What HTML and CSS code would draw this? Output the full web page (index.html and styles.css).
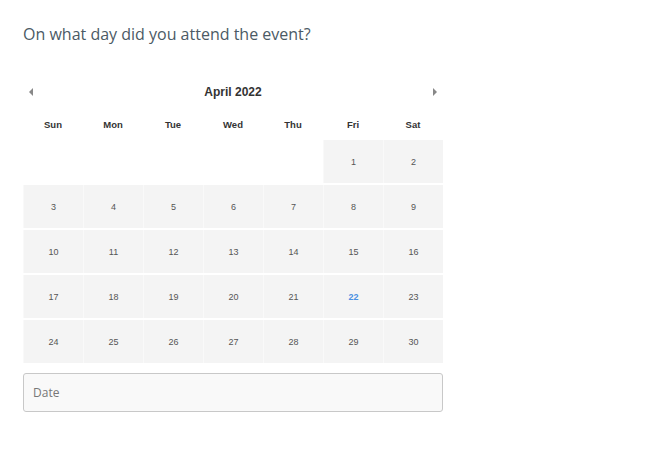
FILE: index.html
```html
<!DOCTYPE html>
<html lang="en">

<head>
    <meta charset="UTF-8">
    <meta name="viewport" content="width=device-width, initial-scale=1.0">
    <title>Event date</title>
    <link rel="stylesheet" href="styles.css">
</head>

<body>

    <p class="question">On what day did you attend the event?</p>

    <div class="calendar">
        <div class="calendar-head">
            <span class="nav-btn prev"></span>
            <span class="month">April 2022</span>
            <span class="nav-btn next"></span>
        </div>

        <div class="weekdays">
            <span>Sun</span>
            <span>Mon</span>
            <span>Tue</span>
            <span>Wed</span>
            <span>Thu</span>
            <span>Fri</span>
            <span>Sat</span>
        </div>

        <div class="days">
            <span class="day empty"></span>
            <span class="day empty"></span>
            <span class="day empty"></span>
            <span class="day empty"></span>
            <span class="day empty"></span>
            <span class="day">1</span>
            <span class="day">2</span>
            <span class="day">3</span>
            <span class="day">4</span>
            <span class="day">5</span>
            <span class="day">6</span>
            <span class="day">7</span>
            <span class="day">8</span>
            <span class="day">9</span>
            <span class="day">10</span>
            <span class="day">11</span>
            <span class="day">12</span>
            <span class="day">13</span>
            <span class="day">14</span>
            <span class="day">15</span>
            <span class="day">16</span>
            <span class="day">17</span>
            <span class="day">18</span>
            <span class="day">19</span>
            <span class="day">20</span>
            <span class="day">21</span>
            <span class="day today">22</span>
            <span class="day">23</span>
            <span class="day">24</span>
            <span class="day">25</span>
            <span class="day">26</span>
            <span class="day">27</span>
            <span class="day">28</span>
            <span class="day">29</span>
            <span class="day">30</span>
        </div>
    </div>

    <input class="date-input" type="text" placeholder="Date">

</body>

</html>
```

FILE: styles.css
```css
/* General */
body {
    margin: 0;
    padding: 0 23px;
    background-color: #fff;
    font-family: "Open Sans", sans-serif;
}

.question {
    margin: 22px 0 0;
    font-size: 16px;
    color: #4b5a65;
    line-height: 24px;
}

/* Calendar */
.calendar {
    width: 420px;
    margin-top: 35px;
    font-family: "Liberation Sans", Arial, sans-serif;
}

.calendar-head {
    display: flex;
    align-items: center;
    justify-content: space-between;
    height: 22px;
    padding: 0 6px;
}

.month {
    font-size: 12px;
    color: #333;
    font-weight: bold;
}

.nav-btn {
    width: 0;
    height: 0;
    border-top: 4px solid transparent;
    border-bottom: 4px solid transparent;
}

.nav-btn.prev {
    border-right: 4px solid #888;
}

.nav-btn.next {
    border-left: 4px solid #888;
}

.weekdays {
    display: grid;
    grid-template-columns: repeat(7, 60px);
    margin-top: 9px;
    height: 24px;
    align-items: center;
}

.weekdays span {
    text-align: center;
    font-size: 9.5px;
    font-weight: bold;
    color: #333;
}

.days {
    display: grid;
    grid-template-columns: repeat(7, 60px);
    row-gap: 2px;
    margin-top: 4px;
}

.day {
    display: flex;
    align-items: center;
    justify-content: center;
    height: 43px;
    background-color: #f4f4f4;
    border-left: 1px solid #f9f9f9;
    font-size: 9px;
    color: #555;
    box-sizing: border-box;
}

.day.empty {
    background-color: transparent;
    border-left: none;
}

.day.today {
    color: #4a90e2;
    font-weight: bold;
}

/* Date field */
.date-input {
    display: block;
    width: 420px;
    height: 39px;
    margin-top: 10px;
    padding: 0 9px;
    box-sizing: border-box;
    border: 1px solid #c8c8c8;
    border-radius: 3px;
    background-color: #f9f9f9;
    font-family: "Open Sans", sans-serif;
    font-size: 12px;
    color: #333;
}

.date-input::placeholder {
    color: #777;
}
```
